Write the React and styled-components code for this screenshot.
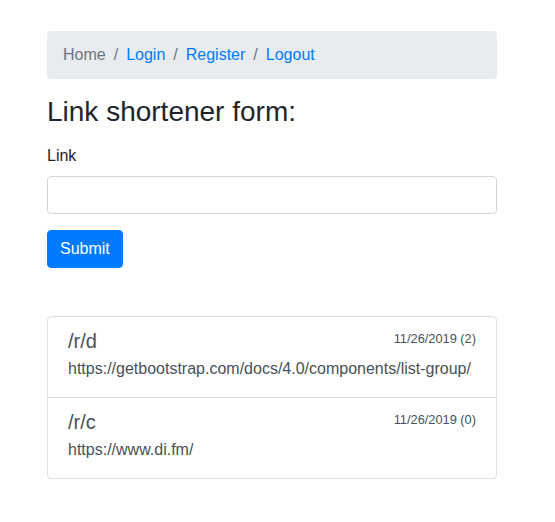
import React from "react";
import styled, { createGlobalStyle } from "styled-components";

const GlobalStyle = createGlobalStyle`
  *, *::before, *::after { box-sizing: border-box; }
  body {
    margin: 0;
    font-family: "Liberation Sans", Arial, sans-serif;
    font-size: 16px;
    line-height: 1.5;
    color: #212529;
    background: #fff;
  }
`;

const Page = styled.div`
  padding: 31px 58px 0 47px;
`;

const Breadcrumb = styled.ol`
  display: flex;
  flex-wrap: wrap;
  list-style: none;
  margin: 0 0 16px;
  padding: 12px 16px;
  background: #e9ecef;
  border-radius: 4px;
`;

const Crumb = styled.li`
  color: #6c757d;

  & + &::before {
    content: "/";
    display: inline-block;
    padding: 0 8px;
    color: #6c757d;
  }
`;

const CrumbLink = styled.a`
  color: #007bff;
  text-decoration: none;
`;

const Title = styled.h3`
  margin: 0 0 15.4px;
  font-size: 28px;
  font-weight: 500;
  line-height: 1.2;
`;

const FormGroup = styled.div`
  margin-bottom: 16px;
`;

const Label = styled.label`
  display: inline-block;
  margin-bottom: 8px;
`;

const Input = styled.input`
  display: block;
  width: 100%;
  height: 38px;
  padding: 6px 12px;
  font: inherit;
  color: #495057;
  background: #fff;
  border: 1px solid #ced4da;
  border-radius: 4px;
  outline: none;
`;

const Button = styled.button`
  display: inline-block;
  padding: 6px 12px;
  font: inherit;
  line-height: 1.5;
  color: #fff;
  background: #007bff;
  border: 1px solid #007bff;
  border-radius: 4px;
`;

const ListGroup = styled.div`
  display: flex;
  flex-direction: column;
  margin-top: 48px;
  border: 1px solid rgba(0, 0, 0, 0.125);
  border-radius: 4px;
`;

const Item = styled.a`
  display: block;
  padding: 12px 20px;
  color: #495057;
  text-decoration: none;

  & + & {
    border-top: 1px solid rgba(0, 0, 0, 0.125);
  }
`;

const ItemHead = styled.div`
  display: flex;
  justify-content: space-between;
  width: 100%;
`;

const ItemTitle = styled.h5`
  margin: 0 0 4px;
  font-size: 20px;
  font-weight: 500;
  line-height: 1.2;
`;

const Small = styled.small`
  font-size: 80%;
  font-weight: 400;
`;

const ItemText = styled.p`
  margin: 0 0 4px;
`;

const links = [
  { path: "/r/d", date: "11/26/2019 (2)", url: "https://getbootstrap.com/docs/4.0/components/list-group/" },
  { path: "/r/c", date: "11/26/2019 (0)", url: "https://www.di.fm/" },
];

export default function App() {
  return (
    <Page>
      <GlobalStyle />
      <nav>
        <Breadcrumb>
          <Crumb>Home</Crumb>
          <Crumb><CrumbLink href="#">Login</CrumbLink></Crumb>
          <Crumb><CrumbLink href="#">Register</CrumbLink></Crumb>
          <Crumb><CrumbLink href="#">Logout</CrumbLink></Crumb>
        </Breadcrumb>
      </nav>
      <Title>Link shortener form:</Title>
      <form onSubmit={(e) => e.preventDefault()}>
        <FormGroup>
          <Label htmlFor="link">Link</Label>
          <Input id="link" type="text" />
        </FormGroup>
        <Button type="submit">Submit</Button>
      </form>
      <ListGroup>
        {links.map((l) => (
          <Item key={l.path} href="#">
            <ItemHead>
              <ItemTitle>{l.path}</ItemTitle>
              <Small>{l.date}</Small>
            </ItemHead>
            <ItemText>{l.url}</ItemText>
          </Item>
        ))}
      </ListGroup>
    </Page>
  );
}
